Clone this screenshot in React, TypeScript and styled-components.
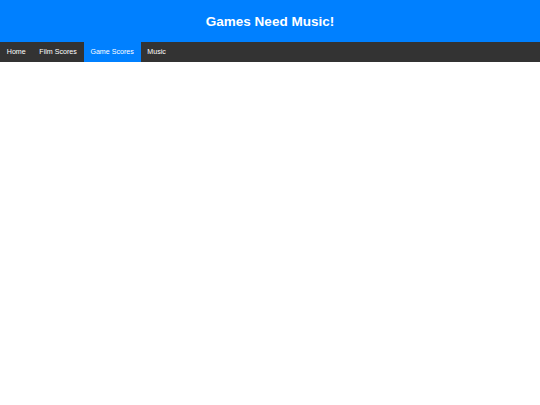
import React from "react";
import styled, { createGlobalStyle } from "styled-components";

const Global = createGlobalStyle`
  html, body { margin: 0; padding: 0; background: #fff; }
  body { font-family: "Liberation Sans", Arial, sans-serif; }
`;

const Header = styled.header`
  background: #0080ff;
  height: 42px;
  display: flex;
  align-items: center;
  justify-content: center;
`;

const Title = styled.h1`
  margin: 0;
  color: #fff;
  font-size: 13.5px;
  font-weight: bold;
`;

const Nav = styled.nav`
  background: #333;
  height: 20px;
  display: flex;
`;

const NavLink = styled.a<{ $active?: boolean }>`
  display: flex;
  align-items: center;
  padding: 0 6.8px;
  font-size: 7.1px;
  color: #fff;
  text-decoration: none;
  background: ${(p) => (p.$active ? "#0080ff" : "transparent")};
`;

const items = ["Home", "Film Scores", "Game Scores", "Music"];

export default function App() {
  return (
    <>
      <Global />
      <Header>
        <Title>Games Need Music!</Title>
      </Header>
      <Nav>
        {items.map((label) => (
          <NavLink key={label} href="#" $active={label === "Game Scores"}>
            {label}
          </NavLink>
        ))}
      </Nav>
    </>
  );
}
